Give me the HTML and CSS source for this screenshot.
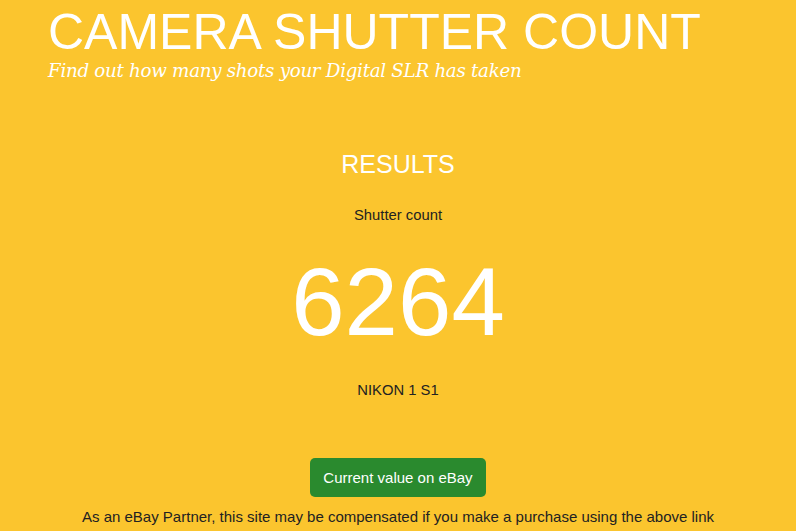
FILE: index.html
```html
<!DOCTYPE html>
<html lang="en">
<head>
  <meta charset="UTF-8">
  <meta name="viewport" content="width=device-width,initial-scale=1">
  <title>Camera Shutter Count – Results</title>
  <link rel="stylesheet" href="styles.css">
</head>
<body>
  <header class="masthead">
    <h1>CAMERA SHUTTER COUNT</h1>
    <p class="tagline">Find out how many shots your Digital SLR has taken</p>
  </header>

  <main class="results">
    <h2>RESULTS</h2>
    <p class="label">Shutter count</p>
    <p class="count">6264</p>
    <p class="model">NIKON 1 S1</p>
    <a class="ebay-btn" href="#">Current value on eBay</a>
    <p class="disclaimer">As an eBay Partner, this site may be compensated if you make a purchase using the above link</p>
  </main>
</body>
</html>
```

FILE: styles.css
```css
* { box-sizing: border-box; margin: 0; padding: 0; }
body {
  font: 14px/1.4 "Liberation Sans", Arial, sans-serif;
  background: #fbc52e;
  color: #222;
  min-height: 100vh;
}
.masthead {
  padding: 5px 48px 0;
  color: #fff;
}
.masthead h1 {
  font-weight: normal;
  font-size: 50px;
  line-height: 54px;
}
.tagline {
  font: italic 18.3px/24px "DejaVu Serif", Georgia, serif;
  letter-spacing: -0.3px;
}
.results {
  display: flex;
  flex-direction: column;
  align-items: center;
  text-align: center;
  padding-top: 66px;
}
.results h2 {
  font-weight: normal;
  font-size: 25px;
  line-height: 30px;
  color: #fff;
}
.label { margin-top: 27px; font-size: 14.8px; line-height: 19px; }
.count {
  font-size: 96px;
  line-height: 110px;
  color: #fff;
  margin-top: 22px;
}
.model { margin-top: 24px; font-size: 14.8px; line-height: 19px; }
.ebay-btn {
  margin-top: 58px;
  padding: 9px 13px;
  font-size: 15px;
  line-height: 21px;
  color: #fff;
  background: #2a8a2e;
  border-radius: 5px;
  text-decoration: none;
}
.disclaimer {
  margin-top: 9px;
  font-size: 15px;
}
```
